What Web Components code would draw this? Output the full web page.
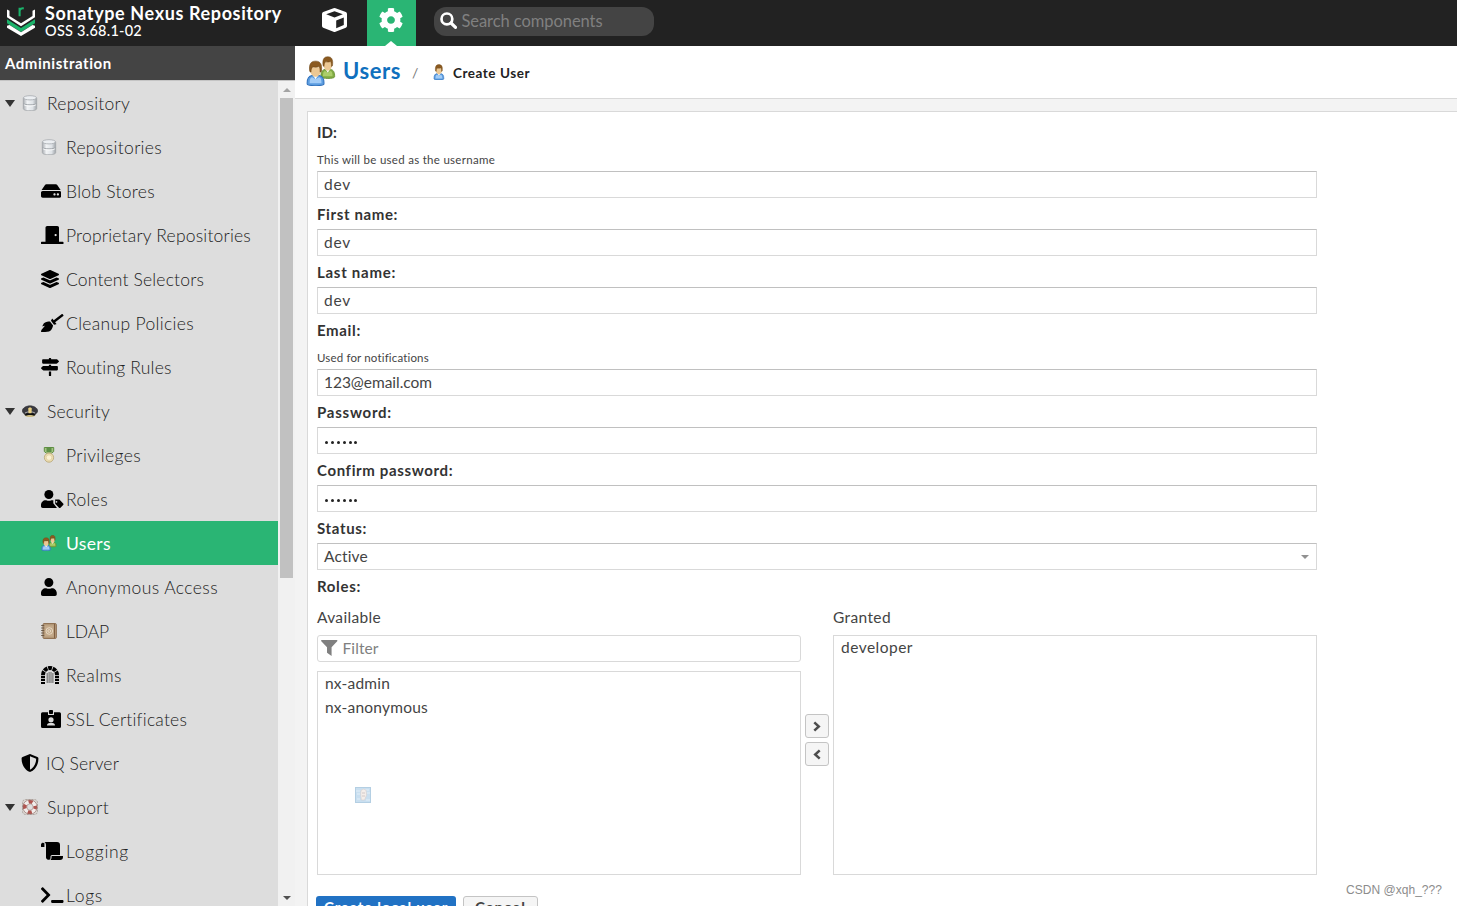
<!DOCTYPE html>
<html lang="en">
<head>
<meta charset="utf-8">
<title>Create User - Sonatype Nexus Repository</title>
<style>
html,body{margin:0;height:100%;overflow:hidden}
body{font-family:Lato,"Open Sans","Liberation Sans",sans-serif;color:#333;background:#f3f3f3}
</style>
</head>
<body>
<nx-app></nx-app>
<script>
const define=(name,html,setup)=>customElements.define(name,class extends HTMLElement{
  constructor(){super();this.attachShadow({mode:'open'})}
  connectedCallback(){
    this.shadowRoot.innerHTML=typeof html==='function'?html(this):html;
    if(setup)setup(this);
  }
});

const P=(vb,body)=>({vb,body});
const DB=`<defs><linearGradient id="g"><stop offset="0" stop-color="#a9adb2"/><stop offset=".3" stop-color="#f1f3f5"/><stop offset=".7" stop-color="#dfe3e7"/><stop offset="1" stop-color="#9fa4a9"/></linearGradient></defs><path d="M1.3 3v10.5C1.3 15 4.3 15.7 8 15.700s6.700-.7 6.700-2.200V3z" fill="url(#g)" stroke="#a2a6aa" stroke-width=".8"/><ellipse cx="8" cy="2.800" rx="6.600" ry="2.100" fill="#eceff2" stroke="#a7abb0" stroke-width=".8"/><path d="M1.500 8.500c1 1.800 12 1.800 13 0" fill="none" stroke="#a0a5aa"/><path d="M2 9.600c1 1.800 11 1.800 12 0" fill="none" stroke="#fff" stroke-width=".8"/>`;
/* Bust drawn in a 13 x 18 box: hair, face, collar, rounded shoulders. */
const person=(x,y,sx,sy,c1,c2,c3)=>`<g transform="translate(${x} ${y}) scale(${sx} ${sy})"><path d="M.4 16.200C.2 12.500 1.500 10.700 4 10.300h5c2.500.4 3.800 2.200 3.600 5.900-.1 1.700-12.100 1.700-12.200 0z" fill="${c1}" stroke="${c3}" stroke-width=".7"/><path d="M2.200 15.700c0-2.500.5-3.900 1.800-4.200l2.500 1.500L9 11.500c1.300.3 1.800 1.700 1.800 4.200z" fill="${c2}" opacity=".75"/><path d="M4.300 9.800l2.200 3.200 2.200-3.200z" fill="#fff"/><path d="M2.700 4.500h7.600v2.500c0 2.300-2 4.300-3.800 4.300S2.700 9.300 2.700 7z" fill="#ecc894"/><path d="M2.300 7.500C1.500 2.500 3 .3 6.500.3s5 2.200 4.200 7.200L9.800 8c.1-2-.2-3.300-.9-3.900-2 .8-3.700.2-4.500.3C3.400 5.200 3.200 6.400 3.200 8z" fill="#8b5a20" stroke="#68400f" stroke-width=".4"/></g>`;
const ICONS={
 db:P('0 0 16 16',DB),
 hdd:P('0 0 576 512','<path d="M576 304v96c0 26.510-21.490 48-48 48H48c-26.510 0-48-21.490-48-48v-96c0-26.510 21.490-48 48-48h480c26.510 0 48 21.490 48 48zm-48-80a79.557 79.557 0 0 1 30.777 6.165L462.250 85.374A48.003 48.003 0 0 0 422.311 64H153.689a48 48 0 0 0-39.938 21.374L17.223 230.165A79.557 79.557 0 0 1 48 224h480zm-48 96c-17.673 0-32 14.327-32 32s14.327 32 32 32 32-14.327 32-32-14.327-32-32-32zm-96 0c-17.673 0-32 14.327-32 32s14.327 32 32 32 32-14.327 32-32-14.327-32-32-32z"/>'),
 door:P('0 0 640 512','<path d="M624 448H512V50.800C512 22.780 490.470 0 464 0H175.990c-26.470 0-48 22.780-48 50.800V448H16c-8.840 0-16 7.160-16 16v32c0 8.840 7.160 16 16 16h608c8.840 0 16-7.160 16-16v-32c0-8.840-7.160-16-16-16zM415.990 288c-17.670 0-32-14.330-32-32s14.330-32 32-32 32 14.330 32 32c.01 17.670-14.320 32-32 32z"/>'),
 layers:P('0 0 512 512','<path d="M12.410 148.020l232.940 105.670c6.800 3.090 14.490 3.090 21.290 0l232.940-105.670c16.550-7.510 16.550-32.520 0-40.030L266.650 2.310a25.607 25.607 0 0 0-21.290 0L12.410 107.980c-16.550 7.510-16.550 32.530 0 40.040zm487.180 88.280l-58.090-26.330-161.640 73.270c-7.560 3.430-15.590 5.170-23.860 5.170s-16.290-1.740-23.860-5.170L70.510 209.970l-58.100 26.330c-16.550 7.500-16.550 32.500 0 40l232.940 105.590c6.800 3.080 14.490 3.080 21.290 0L499.590 276.300c16.550-7.500 16.550-32.500 0-40zm0 127.800l-57.870-26.230-161.860 73.370c-7.560 3.430-15.590 5.170-23.860 5.170s-16.290-1.740-23.860-5.170L70.290 337.870 12.410 364.100c-16.550 7.500-16.550 32.500 0 40l232.940 105.590c6.800 3.080 14.490 3.080 21.290 0L499.590 404.100c16.550-7.500 16.550-32.500 0-40z"/>'),
 broom:P('0 0 640 512','<path d="M256.470 216.770l86.730 109.180s-16.600 102.360-76.570 150.120C206.660 523.850 0 510.190 0 510.190s3.800-23.140 11-55.430l94.620-112.170c3.970-4.700-.87-11.620-6.650-9.500l-60.400 22.090c14.440-41.660 32.720-80.040 54.600-97.470 59.970-47.760 163.300-40.940 163.300-40.940zM636.530 31.030l-19.860-25c-5.490-6.900-15.520-8.050-22.410-2.560l-232.480 177.800-34.140-42.970c-5.090-6.410-15.140-5.210-18.590 2.210l-25.330 54.550 86.730 109.180 58.800-12.450c8-1.690 11.420-11.200 6.340-17.600l-34.090-42.920 232.480-177.800c6.890-5.480 8.040-15.530 2.550-22.440z"/>'),
 signs:P('0 0 512 512','<path d="M507.310 84.690L464 41.370c-6-6-14.140-9.370-22.630-9.370H288V16c0-8.840-7.160-16-16-16h-32c-8.840 0-16 7.160-16 16v16H56c-13.250 0-24 10.750-24 24v80c0 13.250 10.750 24 24 24h385.370c8.490 0 16.620-3.370 22.630-9.370l43.310-43.310c6.250-6.260 6.250-16.380 0-22.630zM224 496c0 8.840 7.160 16 16 16h32c8.840 0 16-7.160 16-16V384h-64v112zm232-272H288v-32h-64v32H70.630c-8.490 0-16.620 3.370-22.630 9.370L4.690 276.690c-6.250 6.250-6.250 16.380 0 22.630L48 342.630c6 6 14.140 9.370 22.630 9.370H456c13.250 0 24-10.750 24-24v-80c0-13.250-10.750-24-24-24z"/>'),
 cap:P('0 0 16 16','<ellipse cx="8" cy="12" rx="5.500" ry="2" fill="#cdbd85"/><path d="M.2 7.800C.6 5 4 2.800 8 2.800s7.400 2.200 7.800 5c.2 1.500-1.700 2.500-2.700 4-2-1.200-8.200-1.200-10.200 0C1.900 10.300 0 9.300.2 7.800z" fill="#3a3a40" stroke="#232326" stroke-width=".5"/><path d="M3 11.500c1-2 9-2 10 0l-.7 1.400c-2-1.200-6.600-1.200-8.600 0z" fill="#111"/><path d="M3 10c2-1.600 8-1.600 10 0" fill="none" stroke="#b8b8bc" stroke-width=".9"/><path d="M8 4.200l1.800 1-.3 5H6.500l-.3-5z" fill="#e8cf80"/>'),
 medal:P('0 0 16 16','<path d="M3.300.500h9.400v4l-2.200 1.800h-5L3.300 4.500z" fill="#a4c482" stroke="#5e8e42"/><path d="M5.500 1v4h5V1" fill="#5f9147"/><circle cx="8" cy="10.600" r="4.600" fill="#efdfb2" stroke="#b9a878" stroke-width=".9"/><circle cx="8" cy="10.600" r="2.800" fill="#fbf1d3" stroke="#e0cfa0" stroke-width=".8"/>'),
 usertag:P('0 0 640 512','<circle cx="224" cy="128" r="128"/><path d="M134 288h17c45 21 101 21 146 0h17l36 4v82l105 138H48c-26 0-48-22-48-48v-42c0-74 60-134 134-134z"/><path d="M402 272h102c12 0 24 5 32 13l94 96c13 13 13 32 0 45l-76 77c-12 12-31 12-43 0l-94-95c-9-9-14-21-14-34V291c0-11 0-19-1-19zm39 40a24 24 0 1 0 0 48 24 24 0 0 0 0-48z" fill-rule="evenodd"/>'),
 users:P('0 0 30 30',person(14.500,.300,1.120,1.270,'#80ab42','#b9d878','#668f31')+person(.6,4.700,1.380,1.430,'#5c9de0','#b9dcff','#2f70bc')),
 user:P('0 0 448 512','<path d="M224 256c70.700 0 128-57.300 128-128S294.700 0 224 0 96 57.300 96 128s57.300 128 128 128zm89.600 32h-16.700c-22.200 10.200-46.900 16-72.900 16s-50.600-5.800-72.900-16h-16.700C60.200 288 0 348.200 0 422.400V464c0 26.500 21.500 48 48 48h352c26.500 0 48-21.500 48-48v-41.600c0-74.200-60.200-134.400-134.400-134.400z"/>'),
 book:P('0 0 16 16','<rect x="2" y=".6" width="13.300" height="14.800" rx="1" fill="#b79c7c" stroke="#8a6b4c"/><path d="M13.500 1v14" stroke="#806044"/><path d="M.2 2.500h3M.2 5h3M.2 7.500h3M.2 10h3M.2 12.500h3" stroke="#6c5a48" stroke-width="1.200"/><rect x="4" y="2.500" width="8.500" height="11" fill="#c3a98a"/><circle cx="8.300" cy="8" r="3.300" fill="none" stroke="#efe3d0" stroke-width=".8"/><circle cx="8.200" cy="8" r="1.400" fill="none" stroke="#efe3d0" stroke-width=".8"/>'),
 dungeon:P('0 0 18 18','<path d="M2 9a7 7 0 0 1 14 0" fill="none" stroke="#000" stroke-width="4" stroke-dasharray="3.800 .75"/><path d="M0 9.800h4v2.400H0zM0 13h4v2.100H0zM0 15.900h4V18H0zM14 9.800h4v2.400h-4zM14 13h4v2.100h-4zM14 15.900h4V18h-4z"/><path d="M6.200 7v10M8.100 6v11M10 6v11M11.900 7v10" stroke="#444" stroke-width=".8"/>'),
 badge:P('0 0 20 18','<path fill-rule="evenodd" d="M1.500 2.200H7V5h6V2.200h5.500A1.500 1.500 0 0 1 20 3.700v12.800a1.500 1.500 0 0 1-1.500 1.500h-17A1.500 1.500 0 0 1 0 16.500V3.700a1.500 1.500 0 0 1 1.500-1.500zM10 7.200a2.600 2.600 0 1 0 0 5.200 2.600 2.600 0 0 0 0-5.200zM6 15.500h8c0-1.500-1-2.500-2.500-2.500h-3C7 13 6 14 6 15.500z"/><rect x="8" y="0" width="4" height="4" rx=".8"/>'),
 shield:P('0 0 512 512','<path d="M466.500 83.700l-192-80a48.150 48.150 0 0 0-36.900 0l-192 80C27.700 91.100 16 108.600 16 128c0 198.500 114.500 335.700 221.500 380.300 11.800 4.900 25.100 4.900 36.900 0C360.100 472.600 496 349.300 496 128c0-19.400-11.700-36.900-29.500-44.300zM256.100 446.300l-.1-381 175.900 73.300c-3.300 151.400-82.100 261.100-175.800 307.700z"/>'),
 ring:P('0 0 16 16','<rect x=".5" y=".5" width="15" height="15" rx="3" fill="#d9d4d0" stroke="#a69c96" stroke-width=".8" stroke-dasharray="2 1"/><circle cx="8" cy="8" r="5.200" fill="none" stroke="#f2eeec" stroke-width="4"/><circle cx="8" cy="8" r="5.200" fill="none" stroke="#b05550" stroke-width="3.800" stroke-dasharray="4.080 4.080" stroke-dashoffset="2.040"/><circle cx="8" cy="8" r="7.200" fill="none" stroke="#8f6b66" stroke-width=".6"/><circle cx="8" cy="8" r="3.200" fill="#dedede" stroke="#9a7773" stroke-width=".5"/>'),
 scroll:P('0 0 22 18','<path d="M0 2.500a2 2 0 0 1 3.400-1.200V5H.6Q0 5 0 4.400zM3.300 0H16a3 3 0 0 1 3 3v10H11a1.500 1.500 0 0 0-1.500 1.500V16c0 1-.7 1.800-1.700 1.800S5 17 5 15.500V3.500C5 1.700 4.500.600 3.300 0zM10.600 14H22v1a3 3 0 0 1-3 3H9.400c1-.8 1.200-2 1.200-4z"/>'),
 terminal:P('0 0 640 512','<path d="M257.981 272.971L63.638 467.314c-9.373 9.373-24.569 9.373-33.941 0L7.029 444.647c-9.357-9.357-9.375-24.522-.04-33.901L161.011 256 6.990 101.255c-9.335-9.379-9.317-24.544.04-33.901l22.667-22.667c9.373-9.373 24.569-9.373 33.941 0L257.981 239.030c9.373 9.372 9.373 24.568 0 33.941zM640 456v-32c0-13.255-10.745-24-24-24H312c-13.255 0-24 10.745-24 24v32c0 13.255 10.745 24 24 24h304c13.255 0 24-10.745 24-24z"/>'),
 cog:P('10 8 492 496','<path d="M487.400 315.700l-42.600-24.600c4.300-23.200 4.300-47 0-70.200l42.600-24.600c4.900-2.800 7.100-8.600 5.500-14-11.100-35.600-30-67.800-54.700-94.600-3.800-4.100-10-5.100-14.800-2.300L380.800 110c-17.900-15.400-38.500-27.300-60.800-35.100V25.800c0-5.600-3.900-10.500-9.400-11.700-36.700-8.200-74.300-7.800-109.200 0-5.500 1.200-9.400 6.100-9.400 11.700V75c-22.200 7.900-42.800 19.800-60.800 35.100L88.700 85.500c-4.900-2.800-11-1.900-14.800 2.300-24.700 26.700-43.600 58.900-54.700 94.600-1.700 5.400.6 11.200 5.500 14L67.300 221c-4.300 23.200-4.300 47 0 70.200l-42.600 24.600c-4.900 2.800-7.100 8.600-5.500 14 11.100 35.600 30 67.800 54.700 94.600 3.800 4.100 10 5.100 14.800 2.300l42.600-24.600c17.900 15.400 38.500 27.300 60.800 35.100v49.200c0 5.600 3.900 10.500 9.400 11.700 36.700 8.200 74.300 7.800 109.200 0 5.500-1.200 9.400-6.100 9.400-11.700v-49.200c22.200-7.900 42.800-19.800 60.800-35.100l42.600 24.600c4.900 2.800 11 1.900 14.800-2.300 24.700-26.700 43.600-58.900 54.700-94.600 1.500-5.500-.7-11.300-5.600-14.100zM256 336c-44.100 0-80-35.900-80-80s35.900-80 80-80 80 35.900 80 80-35.900 80-80 80z"/>'),
 cube:P('0 0 25 24','<path fill-rule="evenodd" d="M11.500.300a3 3 0 0 1 2 0l10.300 3.800q1.200.5 1.200 1.800v12q0 1.200-1.200 1.800l-10.300 4a3 3 0 0 1-2 0L1.200 19.700Q0 19.100 0 17.900v-12q0-1.300 1.200-1.800zM12.500 3.300L4.200 6.300l8.300 3.100 8.300-3.100zM14.200 12.400v7.800l7.600-3.200V9.500z"/>'),
 search:P('0 0 17 17','<circle cx="6.900" cy="6.900" r="5.400" fill="none" stroke="currentColor" stroke-width="2.700"/><path d="M11 11l4.500 4.400" stroke="currentColor" stroke-width="3.200" stroke-linecap="round"/>'),
 filter:P('0 0 17 16','<path d="M.7 0h15.600c.7 0 .8.800.4 1.200L10.900 7.200V16L6.200 12.800V7.200L.3 1.200C-.1.800 0 0 .7 0z"/>'),
 one:P('0 0 16 16',person(2.700,.3,.8,.9,'#5c9de0','#b9dcff','#2f70bc')),
 logo:P('0 0 28 30','<path d="M0 2.500l2.500 1.300v5.500L14 16.800l11.500-7.500V3.800L28 2.500v8.200L14 20 0 10.700z" fill="#fff"/><path d="M0 12.700l14 9 14-9v4.200l-14 9-14-9z" fill="#1bb36b"/><path d="M0 19.400l2.500-.7L14 26l11.500-7.300 2.500.7v2L14 30 0 21.400z" fill="#fff"/><path d="M12.600 9.500V.8M12.600 4C12.800 2 14.500 1 16.800 1.500" fill="none" stroke="#1bb36b" stroke-width="2.100"/>'),
 right:P('0 0 8 11','<path d="M1.300 1.300L5.800 5.500 1.300 9.700" fill="none" stroke="#4d4d4d" stroke-width="2.500"/>'),
 left:P('0 0 8 11','<path d="M6.700 1.300L2.200 5.500l4.500 4.200" fill="none" stroke="#4d4d4d" stroke-width="2.500"/>'),
 broken:P('0 0 16 16','<rect x=".5" y=".5" width="15" height="15" fill="#c9dff0" stroke="#b4cfe3"/><path d="M1 4h4M2 7h3M10 3h4M12 6h3M2 12h3M11 13h4" stroke="#e3eff8"/><path d="M6 3.500Q8 1 11 3l.6 5-2 5H6.300L5.700 7z" fill="#f4eeea" stroke="#d5cfcf" stroke-width=".6"/><path d="M7 6h3M7 9h3" stroke="#d2c8c8"/>')
};
define('nx-icon',el=>{const i=ICONS[el.getAttribute('name')],w=el.getAttribute('w'),h=el.getAttribute('h')||w;
 return `<style>:host{display:block;flex:none;width:${w}px;height:${h}px}svg{display:block}</style><svg width="${w}" height="${h}" viewBox="${i.vb}" preserveAspectRatio="none" fill="currentColor">${i.body}</svg>`});

define('nx-topbar',`<style>
:host{display:flex;height:46px;background:#222;color:#fff;flex:none}
.brand{display:flex;width:310px;box-sizing:border-box;padding:7px 0 0 7px}
.names{padding-left:10px;margin-top:-4px}
.t{font-size:18px;line-height:20px;font-weight:700}.v{font-size:14.500px;line-height:16px;font-weight:500}
.tab{width:49px;display:flex;justify-content:center;padding-top:8px;box-sizing:border-box;position:relative}
.cube{width:57px;padding-right:8px}
.on{background:#2ab574;padding-right:1px}
.on::after{content:"";position:absolute;bottom:0;left:18px;border:6px solid transparent;border-top:0;border-bottom:5px solid #fff}
.search{margin:7px 0 0 18px;width:220px;height:28.500px;box-sizing:border-box;border-radius:12px;background:#444;display:flex;padding:4.500px 0 0 5.500px}
.ph{font-size:16.500px;line-height:18px;color:#808080;padding-left:5px;font-weight:400}
</style>
<div class="brand"><nx-icon name="logo" w="28" h="29"></nx-icon><div class="names"><div class="t"><nx-text w="237">Sonatype Nexus Repository</nx-text></div><div class="v"><nx-text w="97">OSS 3.68.1-02</nx-text></div></div></div>
<div class="tab cube"><nx-icon name="cube" w="25" h="24"></nx-icon></div>
<div class="tab on"><nx-icon name="cog" w="24" h="24"></nx-icon></div>
<div class="search"><nx-icon name="search" w="17"></nx-icon><div class="ph"><nx-text w="141">Search components</nx-text></div></div>`);

define('nx-nav-item',el=>{const a=n=>el.getAttribute(n),lvl=a('level'),group=lvl==='0';
return `<style>
:host{display:flex;align-items:center;height:44px;box-sizing:border-box;font-size:17.500px;font-weight:300;color:#222;padding-left:${group?5:lvl==='1'?21:41}px}
:host([active]){background:#2ab574;color:#fff;font-weight:400}
i{width:0;height:0;border:5px solid transparent;border-top:7px solid #333;border-bottom:0;margin-right:7px}
.ic{width:25px;color:#000;flex:none}
.tx{line-height:22px;padding-top:1px}
</style>${group?'<i></i>':''}<span class="ic"><nx-icon name="${a('icon')}" w="${a('iw')||16}" h="${a('ih')||16}"></nx-icon></span><span class="tx"><nx-text w="${a('tw')}"><slot></slot></nx-text></span>`});

const NAV=[[0,'db',16,16,'Repository',83],[2,'db',16,16,'Repositories',96],[2,'hdd',20.250,18,'Blob Stores',89],[2,'door',22.500,18,'Proprietary Repositories',185],[2,'layers',18,18,'Content Selectors',138],[2,'broom',22.500,18,'Cleanup Policies',128],[2,'signs',18,18,'Routing Rules',106],[0,'cap',16,16,'Security',63],[2,'medal',16,16,'Privileges',75],[2,'usertag',22.500,18,'Roles',42],[2,'users',16,16,'Users',45],[2,'user',15.750,18,'Anonymous Access',152],[2,'book',16,16,'LDAP',43],[2,'dungeon',18,18,'Realms',56],[2,'badge',20,18,'SSL Certificates',121],[1,'shield',18,18,'IQ Server',73],[0,'ring',16,16,'Support',62],[2,'scroll',22,18,'Logging',63],[2,'terminal',22.500,18,'Logs',37]];
define('nx-sidebar',`<style>
:host{display:flex;flex-direction:column;width:295px;flex:none;overflow:hidden;background:#ddd}
h2{margin:0;height:34px;line-height:35px;background:#444;color:#fff;font-size:15px;font-weight:700;padding-left:5px;border-bottom:1px solid #c4c4c4}
.body{display:flex;flex:1;min-height:0}
nav{width:278px;overflow:hidden}
.sb{width:17px;background:#f1f1f1;display:flex;flex-direction:column;padding-left:2px;box-sizing:border-box}
.up,.dn{width:0;height:0;border:4px solid transparent;margin-left:2.500px}
.up{border-top:0;border-bottom-color:#a3a3a3;margin-top:7px;margin-bottom:6px}
.dn{border-bottom:0;border-top-color:#505050;margin-top:auto;margin-bottom:6px}
.th{width:13px;height:480px;background:#c1c1c1}
</style><h2><nx-text w="107">Administration</nx-text></h2><div class="body"><nav>${NAV.map(n=>`<nx-nav-item level="${n[0]}" icon="${n[1]}" iw="${n[2]}" ih="${n[3]}" tw="${n[5]}"${n[4]==='Users'?' active':''}>${n[4]}</nx-nav-item>`).join('')}</nav><div class="sb"><div class="up"></div><div class="th"></div><div class="dn"></div></div></div>`);

define('nx-crumbs',`<style>
:host{display:flex;height:52px;background:#fff;border-bottom:1px solid #d9d9d9;flex:none;padding-left:11px}
.big{margin-top:10px}
.u{font-size:22px;font-weight:700;color:#1070be;line-height:26px;margin:12px 0 0 7px;width:58px}
.s{font-size:14px;line-height:16px;color:#777;margin:19px 0 0 11px;width:8px}
.one{margin:18px 0 0 11px}
.c{font-size:13.500px;font-weight:700;color:#222;line-height:16px;margin:19px 0 0 6px}
</style><nx-icon class="big" name="users" w="30"></nx-icon><div class="u"><nx-text w="58">Users</nx-text></div><div class="s">/</div><nx-icon class="one" name="one" w="16"></nx-icon><div class="c"><nx-text w="77">Create User</nx-text></div>`);

define('nx-field',el=>{const a=n=>el.getAttribute(n),h=a('help');return `<style>
:host{display:block;color:#444}
.l{font-size:15px;font-weight:700;line-height:20px;padding:6px 0 5px;height:20px;color:#333}
.h{font-size:11.500px;line-height:14px;height:14px;padding:6px 0 4px}
.i{height:25px;border:1px solid #d9d9d9;border-top-color:#c0c0c0;background:#fff;padding:0 7px 0 6px;font-size:15.500px;line-height:25px;display:flex;align-items:center;justify-content:space-between}
.arrow{border:4px solid transparent;border-top-color:#919191;border-bottom:0}
.pw{display:flex;gap:2.900px;padding:3px 0 0 1px}.pw b{width:3px;height:3px;border-radius:50%;background:#222}
</style><div class="l"><nx-text w="${a('lw')}">${a('label')}</nx-text></div>${h?`<div class="h"><nx-text w="${a('hw')}">${h}</nx-text></div>`:''}<div class="i">${a('type')==='password'?'<span class="pw"><b></b><b></b><b></b><b></b><b></b><b></b></span>':`<nx-text w="${a('vw')}">${a('value')}</nx-text>`}${a('type')==='select'?'<span class="arrow"></span>':''}</div>`});

define('nx-transfer',`<style>
:host{display:flex;font-size:15.500px;color:#444}
.col{width:484px;display:flex;flex-direction:column}
.cap{line-height:20px;height:28px}
.filter{height:25px;line-height:22px;border:1px solid #d9d9d9;border-radius:3px;display:flex;align-items:center;padding-left:3px;color:#808080;margin-bottom:9px}
.filter nx-icon{margin-top:-1px}
.filter nx-text{margin-left:5px;margin-top:-1px}
.list{border:1px solid #d9d9d9;height:203px;padding-left:7px;position:relative;line-height:24px;box-sizing:border-box;height:204px}
.list div:first-child{margin-top:-1px}
.g{height:240px}
.mid{width:24px;margin:0 4px;display:flex;flex-direction:column;gap:4px;padding-top:107px}
.btn{height:22px;border:1px solid #c4c4c4;border-radius:3px;background:#f5f5f5;display:flex;align-items:center;justify-content:center}
.stray{position:absolute;left:37px;top:115px}
</style>
<div class="col"><div class="cap"><nx-text w="64">Available</nx-text></div><div class="filter"><nx-icon name="filter" w="16.500" h="16"></nx-icon><nx-text w="36">Filter</nx-text></div>
<div class="list"><div><nx-text w="65">nx-admin</nx-text></div><div><nx-text w="103">nx-anonymous</nx-text></div><nx-icon class="stray" name="broken" w="16"></nx-icon></div></div>
<div class="mid"><div class="btn"><nx-icon name="right" w="8" h="11"></nx-icon></div><div class="btn"><nx-icon name="left" w="8" h="11"></nx-icon></div></div>
<div class="col"><div class="cap"><nx-text w="58">Granted</nx-text></div><div class="list g"><div><nx-text w="72">developer</nx-text></div></div></div>`);

define('nx-form',`<style>
:host{display:block;flex:1;min-height:0;margin:12px 0 0 12px;border:1px solid #d9d9d9;border-right:0;border-bottom:0;background:#fff;overflow:hidden}
.in{width:1000px;padding:4px 0 0 9px}
.rl{font-size:15px;font-weight:700;line-height:20px;padding-top:6px;height:31px}
.bt{display:flex;gap:7px;margin:21px 0 0 -1px;font-size:15px;font-weight:700}
.p,.c{height:26px;line-height:20px;border-radius:3px;box-sizing:border-box;text-align:center}
.p{background:#2172c4;color:#fff;width:140px;line-height:22px}.c{border:1px solid #c4c4c4;background:#f5f5f5;color:#444;width:75px}
</style><div class="in">
<nx-field label="ID:" lw="20" help="This will be used as the username" hw="178" value="dev" vw="27"></nx-field>
<nx-field label="First name:" lw="81" value="dev" vw="27"></nx-field>
<nx-field label="Last name:" lw="79" value="dev" vw="27"></nx-field>
<nx-field label="Email:" lw="44" help="Used for notifications" hw="112" value="123@email.com" vw="108"></nx-field>
<nx-field label="Password:" lw="75" type="password"></nx-field>
<nx-field label="Confirm password:" lw="136" type="password"></nx-field>
<nx-field label="Status:" lw="50" type="select" value="Active" vw="44"></nx-field>
<div class="rl"><nx-text w="44">Roles:</nx-text></div>
<nx-transfer></nx-transfer>
<div class="bt"><div class="p"><nx-text w="124">Create local user</nx-text></div><div class="c"><nx-text w="51">Cancel</nx-text></div></div>
</div>`);

define('nx-watermark',`<style>:host{position:absolute;right:15px;bottom:8px;font:12px/16px "Liberation Sans",sans-serif;color:#8c8c8c}</style><nx-text w="96"><slot></slot></nx-text>`);

define('nx-app',`<style>
:host{display:flex;flex-direction:column;height:100vh;position:relative;overflow:hidden}
.row{display:flex;flex:1;min-height:0}
main{flex:1;display:flex;flex-direction:column;min-width:0;background:#f3f3f3}
</style><nx-topbar></nx-topbar><div class="row"><nx-sidebar></nx-sidebar><main><nx-crumbs></nx-crumbs><nx-form></nx-form></main></div><nx-watermark>CSDN @xqh_???</nx-watermark>`);

/* Text run whose tracking is adjusted so that it spans the given width. */
define('nx-text','<style>:host{display:inline-block;white-space:pre}</style><slot></slot>',el=>{
  let s=el.shadowRoot.querySelector('slot'),t=s.assignedNodes({flatten:true}).map(n=>n.textContent).join('');
  const w=+el.getAttribute('w'),n=t.length;
  if(w&&n)el.style.letterSpacing=((w-el.getBoundingClientRect().width)/n).toFixed(3)+'px';
});
</script>
</body>
</html>
